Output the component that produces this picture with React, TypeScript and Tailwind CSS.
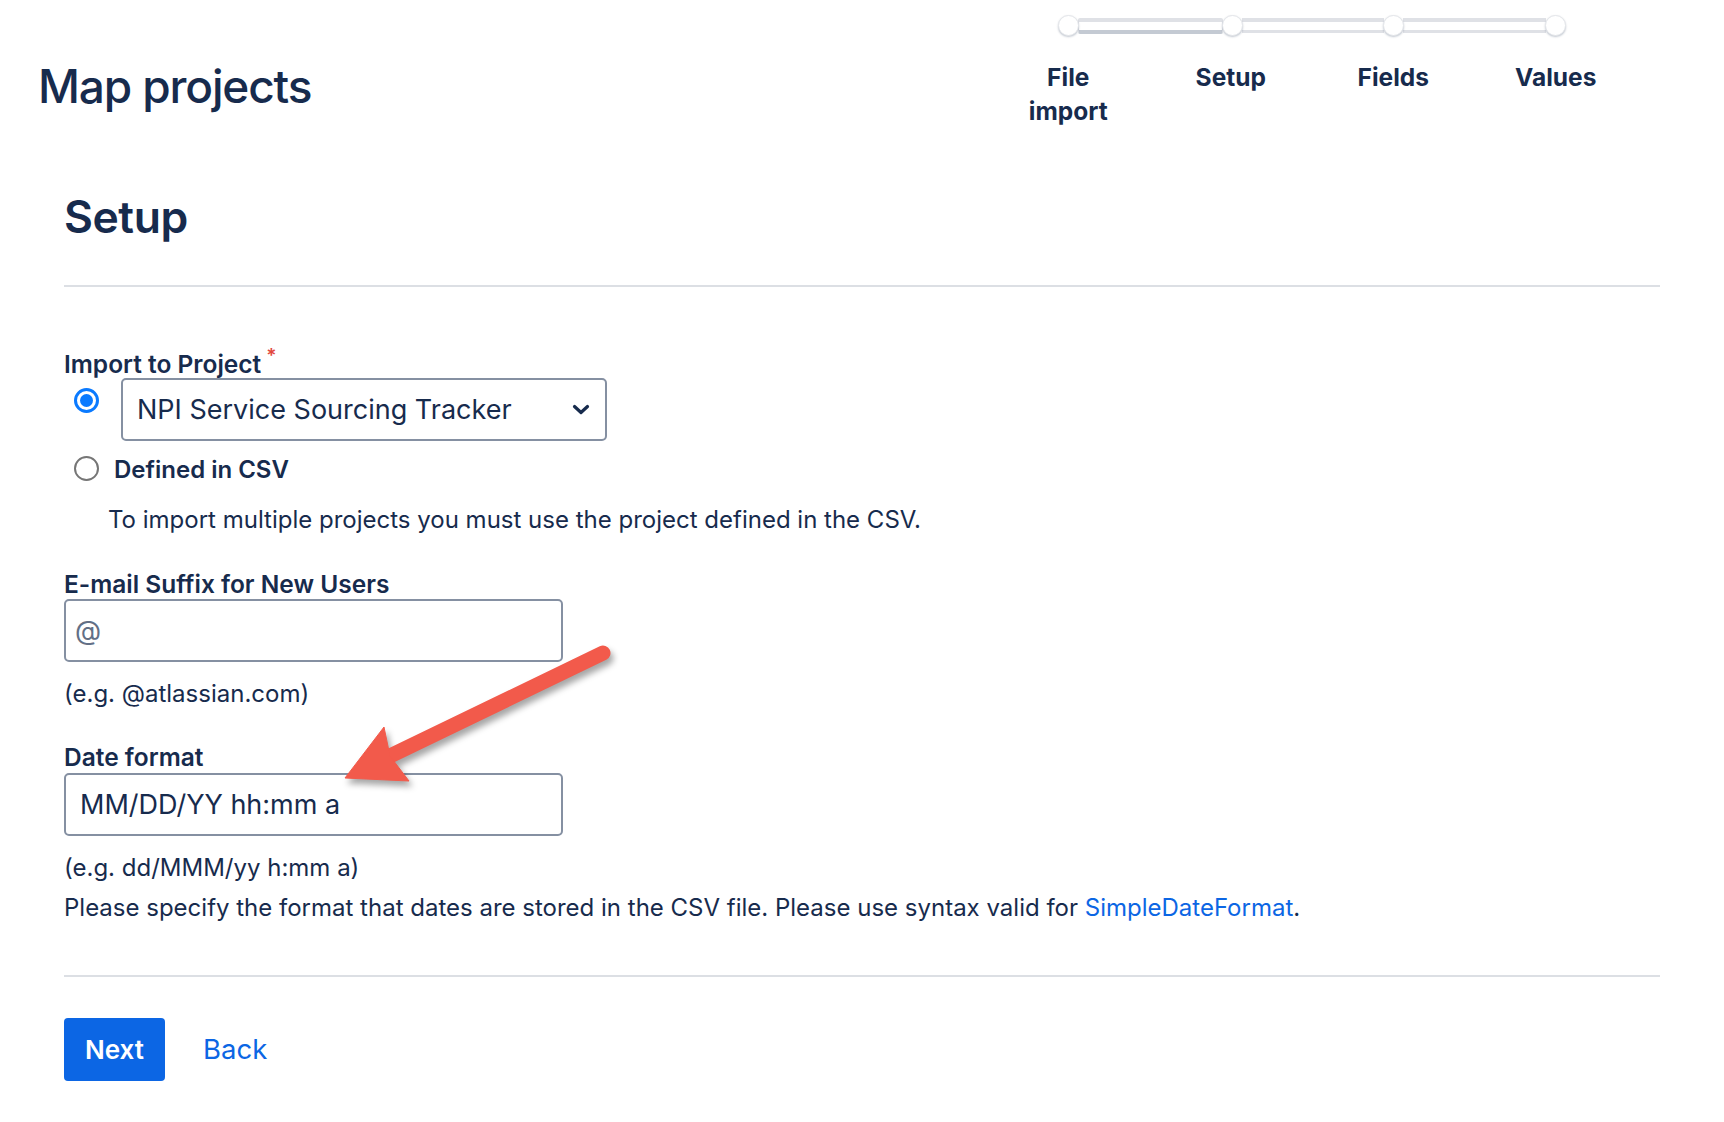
import React from 'react';

const steps = [
  { id: 'file', lines: ['File', 'import'] },
  { id: 'setup', lines: ['Setup'] },
  { id: 'fields', lines: ['Fields'] },
  { id: 'values', lines: ['Values'] },
];

const Stepper: React.FC = () => {
  return (
    <div className="w-[650px]">
      <div className="flex items-center px-[71px] h-[21px]">
        {steps.map((step, idx) => (
          <React.Fragment key={step.id}>
            <span className="relative z-10 block h-[21px] w-[21px] shrink-0 rounded-full border border-[#e4e6ea] bg-white shadow-[0_1px_2px_rgba(9,30,66,0.25)]" />
            {idx < steps.length - 1 ? (
              idx === 0 ? (
                <span className="-mx-px block h-[16px] flex-1 rounded-[2px] border-x border-t-4 border-b-4 border-x-[#dfe1e6] border-t-[#dfe1e6] border-b-[#c4cad3] bg-white" />
              ) : (
                <span className="-mx-px block h-[15px] flex-1 border-t-4 border-b-[3px] border-[#dfe1e6] bg-white" />
              )
            ) : null}
          </React.Fragment>
        ))}
      </div>
      <div className="mt-[24px] grid grid-cols-4">
        {steps.map((step) => (
          <div key={step.id} className="text-center text-[24.5px] font-bold leading-[34px] text-[#172b4d]">
            {step.lines.map((line) => (
              <div key={line}>{line}</div>
            ))}
          </div>
        ))}
      </div>
    </div>
  );
};

const FieldLabel: React.FC<{ children: React.ReactNode; required?: boolean }> = ({ children, required }) => (
  <div className="text-[24.5px] font-semibold leading-[28px] text-[#172b4d]">
    {children}
    {required ? (
      <span className="relative -top-[11px] ml-[5px] text-[19px] leading-none text-[#e2483d]">*</span>
    ) : null}
  </div>
);

const Radio: React.FC<{ checked?: boolean }> = ({ checked }) =>
  checked ? (
    <span className="flex h-[25px] w-[25px] shrink-0 items-center justify-center rounded-full border-[3px] border-[#0a7aff] bg-white">
      <span className="block h-[13px] w-[13px] rounded-full bg-[#0a7aff]" />
    </span>
  ) : (
    <span className="block h-[25px] w-[25px] shrink-0 rounded-full border-2 border-[#767676] bg-white" />
  );

const Arrow: React.FC = () => (
  <svg
    className="pointer-events-none absolute left-0 top-0"
    width="1724"
    height="1122"
    viewBox="0 0 1724 1122"
  >
    <g style={{ filter: 'drop-shadow(3px 5px 3px rgba(0,0,0,0.35))' }} fill="#f25a4b" stroke="#f25a4b">
      <line x1="603" y1="653" x2="392" y2="755" strokeWidth="15" strokeLinecap="round" />
      <polygon points="345,778 384,727 390,756 409,781" strokeWidth="1" strokeLinejoin="round" />
    </g>
  </svg>
);

export default function App() {
  return (
    <div className="relative min-h-[1122px] w-full bg-white text-[#172b4d]" style={{ fontFamily: 'Inter, "Noto Sans", sans-serif' }}>
      <header className="flex items-start justify-between">
        <h1 className="pl-[38px] pt-[57px] text-[46px] font-medium leading-[58px] tracking-[-0.025em]">Map projects</h1>
        <div className="pr-[87px] pt-[15px]">
          <Stepper />
        </div>
      </header>

      <main className="px-[64px]">
        <h2 className="mt-[63px] text-[44.5px] font-semibold leading-[52px] tracking-[-0.01em]">Setup</h2>
        <div className="mt-[42px] border-t-2 border-[#dcdfe4]" />

        <section className="mt-[63px]">
          <FieldLabel required>Import to Project</FieldLabel>
          <div className="flex items-start">
            <div className="ml-[10px] mt-[10px]">
              <Radio checked />
            </div>
            <div className="ml-[22px] flex h-[63px] w-[486px] items-center justify-between rounded-[5px] border-2 border-[#8590a2] pl-[14px] pr-[14px]">
              <span className="text-[27px] leading-none">NPI Service Sourcing Tracker</span>
              <svg width="18" height="12" viewBox="0 0 18 12" className="mr-[1px]">
                <path d="M2.5 2.5 L9 8.5 L15.5 2.5" fill="none" stroke="#172b4d" strokeWidth="3.2" strokeLinecap="round" strokeLinejoin="round" />
              </svg>
            </div>
          </div>
          <div className="mt-[11px] flex items-center">
            <div className="ml-[10px]">
              <Radio />
            </div>
            <span className="ml-[15px] mt-[4px] text-[24px] font-semibold leading-[28px]">Defined in CSV</span>
          </div>
          <p className="ml-[44px] mt-[22px] text-[24px] leading-[28px]">
            To import multiple projects you must use the project defined in the CSV.
          </p>
        </section>

        <section className="mt-[36px]">
          <FieldLabel>E-mail Suffix for New Users</FieldLabel>
          <div className="mt-[1px] flex h-[63px] w-[499px] items-center rounded-[5px] border-2 border-[#8590a2] pl-[9px]">
            <span className="text-[27px] leading-none text-[#626f86]">@</span>
          </div>
          <p className="mt-[18px] text-[24px] leading-[28px]">(e.g. @atlassian.com)</p>
        </section>

        <section className="mt-[35px]">
          <FieldLabel>Date format</FieldLabel>
          <div className="mt-[2px] flex h-[63px] w-[499px] items-center rounded-[5px] border-2 border-[#8590a2] pl-[14px]">
            <span className="text-[27px] leading-none">MM/DD/YY hh:mm a</span>
          </div>
          <p className="mt-[18px] text-[24px] leading-[28px]">(e.g. dd/MMM/yy h:mm a)</p>
          <p className="mt-[12px] text-[24px] leading-[28px]">
            Please specify the format that dates are stored in the CSV file. Please use syntax valid for{' '}
            <a className="text-[#0c66e4]">SimpleDateFormat</a>.
          </p>
        </section>

        <div className="mt-[53px] border-t-2 border-[#dcdfe4]" />

        <div className="mt-[41px] flex items-center">
          <button className="flex h-[63px] w-[101px] items-center justify-center rounded-[4px] bg-[#0c66e4] text-[26px] font-semibold text-white">
            Next
          </button>
          <a className="ml-[38px] text-[27.5px] text-[#0c66e4]">Back</a>
        </div>
      </main>

      <Arrow />
    </div>
  );
}
